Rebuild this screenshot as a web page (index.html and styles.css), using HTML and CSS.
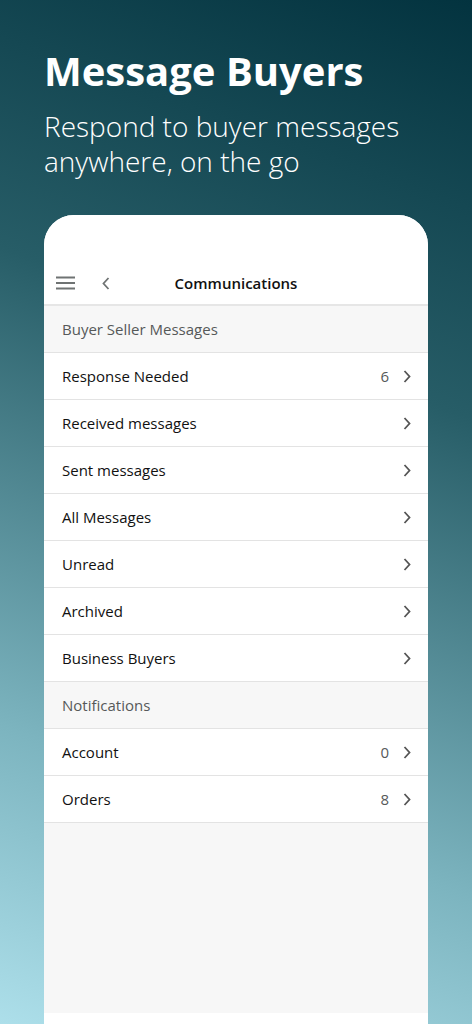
FILE: index.html
```html
<!DOCTYPE html>
<html lang="en">
<head>
  <meta charset="UTF-8">
  <meta name="viewport" content="width=device-width, initial-scale=1.0">
  <title>Message Buyers</title>
  <link rel="stylesheet" href="styles.css">
</head>
<body>
  <div id="hero">
    <h1>Message Buyers</h1>
    <p>Respond to buyer messages anywhere, on the go</p>
  </div>

  <div id="phone">
    <div class="status"></div>
    <div class="navbar">
      <svg class="menu" width="19" height="14" viewBox="0 0 19 14">
        <path d="M0 1.5h19M0 7h19M0 12.5h19" stroke="#6f7373" stroke-width="2"/>
      </svg>
      <svg class="back" width="8" height="13" viewBox="0 0 8 13">
        <path d="M6.5 1L1.5 6.5l5 5.5" fill="none" stroke="#6f7373" stroke-width="1.8"/>
      </svg>
      <span class="title">Communications</span>
    </div>

    <div class="section">Buyer Seller Messages</div>
    <div class="row"><span>Response Needed</span><span class="count">6</span><svg class="chev" width="8" height="13" viewBox="0 0 8 13"><path d="M1.5 1l5 5.5-5 5.5" fill="none" stroke="#555" stroke-width="1.8"/></svg></div>
    <div class="row"><span>Received messages</span><svg class="chev" width="8" height="13" viewBox="0 0 8 13"><path d="M1.5 1l5 5.5-5 5.5" fill="none" stroke="#555" stroke-width="1.8"/></svg></div>
    <div class="row"><span>Sent messages</span><svg class="chev" width="8" height="13" viewBox="0 0 8 13"><path d="M1.5 1l5 5.5-5 5.5" fill="none" stroke="#555" stroke-width="1.8"/></svg></div>
    <div class="row"><span>All Messages</span><svg class="chev" width="8" height="13" viewBox="0 0 8 13"><path d="M1.5 1l5 5.5-5 5.5" fill="none" stroke="#555" stroke-width="1.8"/></svg></div>
    <div class="row"><span>Unread</span><svg class="chev" width="8" height="13" viewBox="0 0 8 13"><path d="M1.5 1l5 5.5-5 5.5" fill="none" stroke="#555" stroke-width="1.8"/></svg></div>
    <div class="row"><span>Archived</span><svg class="chev" width="8" height="13" viewBox="0 0 8 13"><path d="M1.5 1l5 5.5-5 5.5" fill="none" stroke="#555" stroke-width="1.8"/></svg></div>
    <div class="row"><span>Business Buyers</span><svg class="chev" width="8" height="13" viewBox="0 0 8 13"><path d="M1.5 1l5 5.5-5 5.5" fill="none" stroke="#555" stroke-width="1.8"/></svg></div>

    <div class="section">Notifications</div>
    <div class="row"><span>Account</span><span class="count">0</span><svg class="chev" width="8" height="13" viewBox="0 0 8 13"><path d="M1.5 1l5 5.5-5 5.5" fill="none" stroke="#555" stroke-width="1.8"/></svg></div>
    <div class="row"><span>Orders</span><span class="count">8</span><svg class="chev" width="8" height="13" viewBox="0 0 8 13"><path d="M1.5 1l5 5.5-5 5.5" fill="none" stroke="#555" stroke-width="1.8"/></svg></div>

    <div class="filler"></div>
    <div class="bottom"></div>
  </div>
</body>
</html>
```
FILE: styles.css
```css
html, body {
  height: 100%;
}
body {
  margin: 0;
  font-family: "Open Sans", "Noto Sans", sans-serif;
  background: linear-gradient(200deg, #03333f 0%, #275d67 35%, #7cb4bf 75%, #addfea 100%);
  overflow: hidden;
  display: flex;
  flex-direction: column;
}
#hero {
  padding: 44px 44px 0;
  color: #fff;
}
#hero h1 {
  margin: 0;
  font-size: 40px;
  font-weight: 700;
  line-height: 54px;
}
#hero p {
  margin: 11px 0 0;
  font-size: 28px;
  font-weight: 300;
  line-height: 35px;
  width: 380px;
}
#phone {
  margin: 36px 44px 0;
  flex: 1;
  background: #f7f7f7;
  border-radius: 30px 30px 0 0;
  overflow: hidden;
  display: flex;
  flex-direction: column;
}
.status {
  height: 47px;
  background: #fff;
}
.navbar {
  height: 42px;
  background: #fff;
  border-bottom: 2px solid #e6e6e6;
  display: flex;
  align-items: center;
  position: relative;
}
.menu {
  margin-left: 12px;
}
.back {
  margin-left: 27px;
}
.title {
  position: absolute;
  left: 0;
  right: 0;
  text-align: center;
  font-size: 15px;
  font-weight: 600;
  color: #111;
  pointer-events: none;
}
.section {
  height: 46px;
  padding-left: 18px;
  display: flex;
  align-items: center;
  font-size: 15px;
  color: #565959;
  background: #f7f7f7;
  border-bottom: 1px solid #e3e3e3;
}
.row {
  height: 46px;
  padding: 0 17px 0 18px;
  display: flex;
  align-items: center;
  font-size: 15px;
  color: #111;
  background: #fff;
  border-bottom: 1px solid #e3e3e3;
}
.row span:first-child {
  flex: 1;
}
.count {
  color: #565959;
  margin-right: 14px;
}
.filler {
  flex: 1;
  background: #f7f7f7;
}
.bottom {
  height: 11px;
  background: #fff;
}
```
